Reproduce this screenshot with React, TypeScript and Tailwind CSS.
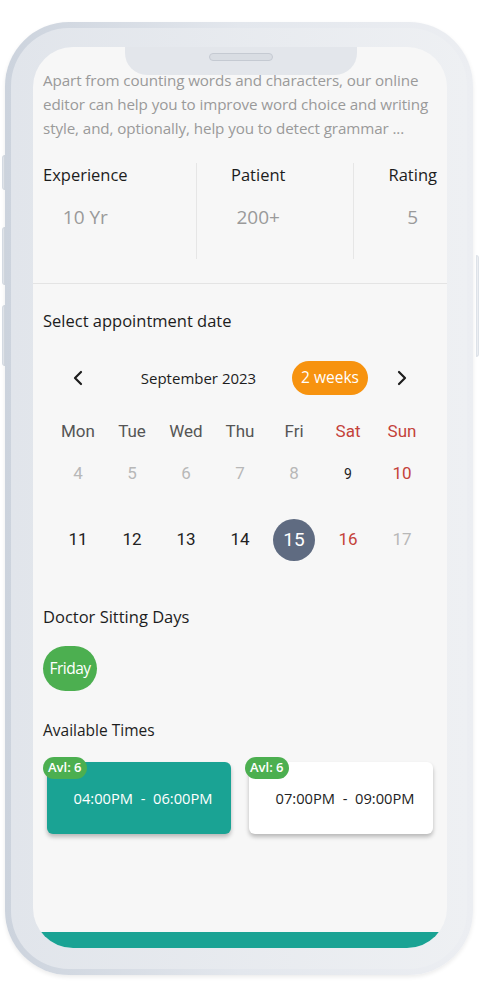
import React from 'react';

const sans = { fontFamily: '"Open Sans", "Noto Sans", sans-serif' };
const roboto = { fontFamily: 'Roboto, "Noto Sans", sans-serif' };

const weekdays = ['Mon', 'Tue', 'Wed', 'Thu', 'Fri', 'Sat', 'Sun'];

type Day = { n: number; tone: 'past' | 'normal' | 'red' | 'small' | 'selected' };

const week1: Day[] = [
    { n: 4, tone: 'past' },
    { n: 5, tone: 'past' },
    { n: 6, tone: 'past' },
    { n: 7, tone: 'past' },
    { n: 8, tone: 'past' },
    { n: 9, tone: 'small' },
    { n: 10, tone: 'red' },
];

const week2: Day[] = [
    { n: 11, tone: 'normal' },
    { n: 12, tone: 'normal' },
    { n: 13, tone: 'normal' },
    { n: 14, tone: 'normal' },
    { n: 15, tone: 'selected' },
    { n: 16, tone: 'red' },
    { n: 17, tone: 'past' },
];

function DayCell({ day }: { day: Day }) {
    if (day.tone === 'selected') {
        return (
            <div className="flex h-[44px] items-center justify-center">
                <span className="flex h-[42px] w-[42px] items-center justify-center rounded-full bg-[#5f6b81] text-[19px] text-white">
                    {day.n}
                </span>
            </div>
        );
    }
    const color =
        day.tone === 'past'
            ? 'text-[#b8b8b8] text-[17px]'
            : day.tone === 'red'
              ? 'text-[#c4423a] text-[17px]'
              : day.tone === 'small'
                ? 'text-[#222] text-[14px]'
                : 'text-[#222] text-[17px]';
    return <div className={`flex h-[44px] items-center justify-center ${color}`}>{day.n}</div>;
}

function TimeSlot({ label, active }: { label: string; active?: boolean }) {
    return (
        <div
            className={`relative flex h-[72px] w-[184px] items-center justify-center rounded-[6px] pl-2 text-[14.7px] shadow-[0_3px_4px_rgba(0,0,0,0.25)] ${
                active ? 'bg-[#1aa394] text-white' : 'bg-white text-[#222]'
            }`}
        >
            <span className="absolute left-[-4px] top-[-5px] flex h-[22px] items-center rounded-full bg-[#4caf50] px-[5px] text-[13px] font-semibold text-white">
                Avl: 6
            </span>
            <span className="whitespace-pre">{label}</span>
        </div>
    );
}

export default function App() {
    return (
        <div className="min-h-screen bg-white" style={sans}>
            <div className="flex pt-[22px]">
                {/* left side buttons */}
                <div className="flex w-[5px] flex-col items-end">
                    <div className="mt-[133px] h-[35px] w-[3px] rounded-l-sm border border-[#d6dce4] bg-[#e4e8ee]" />
                    <div className="mt-[37px] h-[58px] w-[3px] rounded-l-sm border border-[#d6dce4] bg-[#e4e8ee]" />
                    <div className="mt-[20px] h-[61px] w-[3px] rounded-l-sm border border-[#d6dce4] bg-[#e4e8ee]" />
                </div>

                {/* phone frame */}
                <div className="h-[953px] w-[468px] rounded-[64px] bg-gradient-to-r from-[#ccd3dd] via-[#e3e7ed] to-[#eceef2] p-[6px] shadow-[0_2px_4px_rgba(0,0,0,0.08)]">
                    <div className="flex h-full w-full rounded-[58px] bg-gradient-to-r from-[#e1e5eb] to-[#eef0f3] pb-[21px] pl-[22px] pr-[20px] pt-[19px]">
                        <div className="relative flex h-[901px] w-[414px] flex-col overflow-hidden rounded-[40px] bg-[#f7f7f7]">
                            {/* notch */}
                            <div className="absolute left-[92px] top-0 flex h-[28px] w-[232px] justify-center rounded-b-[22px] bg-[#e3e6eb]">
                                <div className="mt-[6px] h-[8px] w-[64px] rounded-full border border-[#c5cad2] bg-[#d9dde3]" />
                            </div>

                            <div className="px-[10px] pt-[21px]">
                                <p className="text-[15.2px] leading-[24px] tracking-[-0.1px] text-[#9a9a9a]">
                                    Apart from counting words and characters, our online editor can help you to improve word choice and writing style, and, optionally, help you to detect grammar ...
                                </p>

                                {/* stats */}
                                <div className="-mx-[10px] border-b border-[#e4e4e4] px-[10px] pb-[24px]">
                                    <div className="mt-[23px] flex h-[96px]">
                                        <div className="w-[154px] border-r border-[#e6e6e6]">
                                            <div className="inline-flex flex-col items-center">
                                                <span className="text-[16.5px] font-medium leading-[24px] text-[#1d1d1d]">Experience</span>
                                                <span className="mt-[16px] text-[19px] leading-[28px] text-[#9a9a9a]">10 Yr</span>
                                            </div>
                                        </div>
                                        <div className="w-[157px] border-r border-[#e6e6e6] pl-[34px]">
                                            <div className="inline-flex flex-col items-center">
                                                <span className="text-[16.5px] font-medium leading-[24px] text-[#1d1d1d]">Patient</span>
                                                <span className="mt-[16px] text-[19px] leading-[28px] text-[#9a9a9a]">200+</span>
                                            </div>
                                        </div>
                                        <div className="flex flex-1 justify-end">
                                            <div className="inline-flex flex-col items-center">
                                                <span className="text-[16.5px] font-medium leading-[24px] text-[#1d1d1d]">Rating</span>
                                                <span className="mt-[16px] text-[19px] leading-[28px] text-[#9a9a9a]">5</span>
                                            </div>
                                        </div>
                                    </div>
                                </div>

                                <h2 className="mt-[25px] text-[16.5px] font-medium leading-[24px] text-[#1d1d1d]">Select appointment date</h2>

                                {/* calendar */}
                                <div className="px-[8px]">
                                    <div className="mt-[28px] flex h-[34px] items-center">
                                        <div className="flex w-[54px] justify-center">
                                            <svg width="12" height="18" viewBox="0 0 12 18" fill="none" stroke="#1d1d1d" strokeWidth="2.2" strokeLinecap="round" strokeLinejoin="round">
                                                <path d="M9 3 3 9l6 6" />
                                            </svg>
                                        </div>
                                        <div className="flex-1 text-center text-[15px] font-medium text-[#1d1d1d]">September 2023</div>
                                        <div className="flex h-[34px] w-[76px] items-center justify-center rounded-full bg-[#f7930f] text-[15.5px] text-white">
                                            2 weeks
                                        </div>
                                        <div className="ml-[7px] flex w-[54px] justify-center">
                                            <svg width="12" height="18" viewBox="0 0 12 18" fill="none" stroke="#1d1d1d" strokeWidth="2.2" strokeLinecap="round" strokeLinejoin="round">
                                                <path d="m3 3 6 6-6 6" />
                                            </svg>
                                        </div>
                                    </div>

                                    <div className="mt-[24px] grid grid-cols-7 text-[17px] leading-[24px]" style={roboto}>
                                        {weekdays.map((d) => (
                                            <div key={d} className={`text-center ${d === 'Sat' || d === 'Sun' ? 'text-[#c4423a]' : 'text-[#555]'}`}>
                                                {d}
                                            </div>
                                        ))}
                                    </div>

                                    <div className="mt-[9px] grid grid-cols-7 gap-y-[22px]" style={roboto}>
                                        {[...week1, ...week2].map((d) => (
                                            <DayCell key={d.n} day={d} />
                                        ))}
                                    </div>
                                </div>

                                <h2 className="mt-[43px] text-[16.5px] font-medium leading-[24px] text-[#1d1d1d]">Doctor Sitting Days</h2>
                                <div className="mt-[17px] flex">
                                    <span className="flex h-[45px] w-[54px] items-center justify-center rounded-full bg-[#4caf50] text-[15.5px] tracking-[-0.5px] text-white">
                                        Friday
                                    </span>
                                </div>

                                <h2 className="mt-[27px] text-[15.5px] font-medium leading-[24px] text-[#1d1d1d]">Available Times</h2>
                                <div className="mt-[20px] flex gap-[18px] pl-[4px]">
                                    <TimeSlot label="04:00PM  -  06:00PM" active />
                                    <TimeSlot label="07:00PM  -  09:00PM" />
                                </div>
                            </div>

                            <div className="mt-auto h-[16px] bg-[#1aa394]" />
                        </div>
                    </div>
                </div>

                {/* right side button */}
                <div className="flex w-[7px] flex-col items-start">
                    <div className="ml-[3px] mt-[233px] h-[102px] w-[3px] rounded-r-sm border border-[#dde2e8] bg-[#eceef2]" />
                </div>
            </div>
        </div>
    );
}
